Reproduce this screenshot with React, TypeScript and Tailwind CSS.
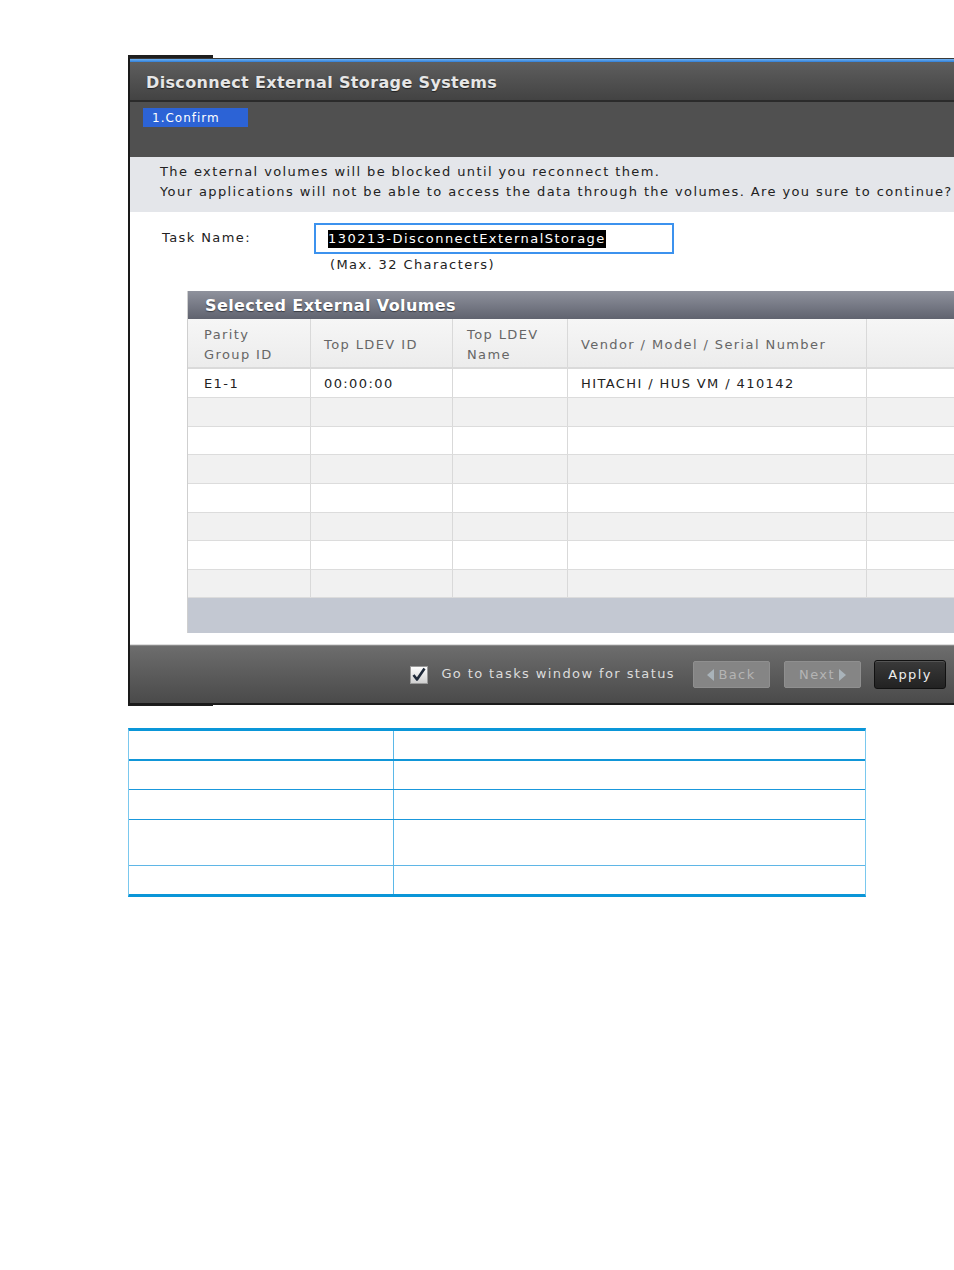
import React from "react";

const rowHeights = [29, 29, 28, 29, 29, 28, 29, 28];
const colW = ["w-[123px]", "w-[142px]", "w-[115px]", "w-[299px]", "w-[120px]"];
const colPad = ["pl-[16px]", "pl-[13px]", "pl-[14px]", "pl-[13px]", "pl-[13px]"];

function Cell({ i, children, header }: { i: number; children?: React.ReactNode; header?: boolean }) {
  return (
    <div
      className={`${colW[i]} ${colPad[i]} shrink-0 h-full border-r border-[#d9d9d9] flex items-center ${
        header ? "text-[#666] pt-[4px]" : "text-[#222] pt-[1px]"
      }`}
    >
      {children}
    </div>
  );
}

export default function App() {
  return (
    <div className="w-[954px] h-[1270px] bg-white overflow-hidden font-['DejaVu_Sans',Verdana,sans-serif] text-[13px] tracking-[1.4px]">
      <div className="pt-[55px] pl-[128px]">
        <div className="w-[826px] overflow-hidden">
          {/* top tab strip */}
          <div className="flex h-[3px]">
            <div className="w-[85px] bg-[#1e1e1e]" />
            <div className="flex-1 bg-white" />
          </div>
          <div className="border-l-2 border-b-2 border-[#1a1a1a]">
            <div className="h-[1px] bg-[#3a3a3a]" />
            <div className="h-[3px] bg-linear-to-b from-[#6fb2f2] to-[#2f7fd8]" />
            <div className="h-[38px] bg-linear-to-b from-[#5e5e5e] to-[#434343] flex items-center pl-[16px] pt-[3px]">
              <span className="text-[#e6e6e6] font-bold text-[16px] tracking-[0.35px] [text-shadow:0_1px_1px_#222]">
                Disconnect External Storage Systems
              </span>
            </div>
            <div className="h-[2px] bg-[#2b2b2b]" />
            <div className="h-[55px] bg-[#505050] pt-[6px] pl-[13px]">
              <div className="w-[105px] h-[19px] bg-[#2c63d6] text-white text-[12px] tracking-[1px] flex items-center pl-[9px]">
                1.Confirm
              </div>
            </div>
            <div className="h-[55px] bg-[#e4e6ea] pt-[5px] pl-[30px] leading-[20px] text-[#222] whitespace-nowrap">
              <div>The external volumes will be blocked until you reconnect them.</div>
              <div>Your applications will not be able to access the data through the volumes. Are you sure to continue?</div>
            </div>

            {/* body */}
            <div className="h-[433px] bg-white pt-[11px] border-b border-[#dedede]">
              <div className="flex items-center pl-[32px]">
                <div className="w-[152px] text-[#222] -mt-[2px]">Task Name:</div>
                <div className="w-[360px] h-[31px] border-2 border-[#3c92ee] flex items-center pl-[12px] bg-white">
                  <span className="bg-black text-white leading-[18px] tracking-[1.45px]">130213-DisconnectExternalStorage</span>
                </div>
              </div>
              <div className="mt-[2px] pl-[200px] leading-[18px] text-[#222]">(Max. 32 Characters)</div>

              <div className="mt-[17px] ml-[57px] w-[800px] border-l border-[#cfcfcf]">
                <div className="h-[28px] bg-linear-to-b from-[#8f929d] to-[#60636f] flex items-center pl-[17px] pt-[2px]">
                  <span className="text-white font-bold text-[16px] tracking-[0.4px] [text-shadow:0_1px_1px_#3a3c44]">
                    Selected External Volumes
                  </span>
                </div>
                <div className="h-[50px] flex bg-linear-to-b from-[#f6f6f6] to-[#ececec] border-b-2 border-[#dadada] leading-[20px]">
                  <Cell i={0} header>
                    <div>
                      Parity
                      <br />
                      Group ID
                    </div>
                  </Cell>
                  <Cell i={1} header>
                    Top LDEV ID
                  </Cell>
                  <Cell i={2} header>
                    <div>
                      Top LDEV
                      <br />
                      Name
                    </div>
                  </Cell>
                  <Cell i={3} header>
                    Vendor / Model / Serial Number
                  </Cell>
                  <Cell i={4} header />
                </div>
                {rowHeights.map((h, i) => (
                  <div
                    key={i}
                    className={`flex border-b border-[#dcdcdc] ${i % 2 === 0 ? "bg-white" : "bg-[#f1f1f1]"}`}
                    style={{ height: h }}
                  >
                    <Cell i={0}>{i === 0 ? "E1-1" : ""}</Cell>
                    <Cell i={1}>{i === 0 ? "00:00:00" : ""}</Cell>
                    <Cell i={2} />
                    <Cell i={3}>{i === 0 ? "HITACHI / HUS VM / 410142" : ""}</Cell>
                    <Cell i={4} />
                  </div>
                ))}
                <div className="h-[35px] bg-[#c3c8d2]" />
              </div>
            </div>

            {/* bottom bar */}
            <div className="h-[58px] bg-linear-to-b from-[#6d6d6d] to-[#4a4a4a] border-t border-[#8a8a8a] flex items-center justify-end pr-[8px]">
              <svg width="18" height="18" viewBox="0 0 18 18" className="mr-[13px]">
                <defs>
                  <linearGradient id="cb" x1="0" y1="0" x2="0" y2="1">
                    <stop offset="0" stopColor="#ffffff" />
                    <stop offset="1" stopColor="#cfcfcf" />
                  </linearGradient>
                </defs>
                <rect x="0.5" y="0.5" width="17" height="17" fill="url(#cb)" stroke="#9a9a9a" />
                <path d="M3.5 9 L7 13.5 L14.5 2.5" fill="none" stroke="#1f2a3a" strokeWidth="2.6" strokeLinejoin="round" />
              </svg>
              <span className="text-[#dcdcdc] mr-[18px] -mt-[2px]">Go to tasks window for status</span>
              <div className="w-[77px] h-[27px] rounded-[2px] bg-[#858585] border border-[#8f8f8f] flex items-center justify-center gap-[4px] text-[#b4b4b4] mr-[14px]">
                <svg width="7" height="12" viewBox="0 0 7 12">
                  <path d="M7 0 L0 6 L7 12 Z" fill="#a9b3ba" />
                </svg>
                <span>Back</span>
              </div>
              <div className="w-[77px] h-[27px] rounded-[2px] bg-[#858585] border border-[#8f8f8f] flex items-center justify-center gap-[4px] text-[#b4b4b4] mr-[13px]">
                <span>Next</span>
                <svg width="7" height="12" viewBox="0 0 7 12">
                  <path d="M0 0 L7 6 L0 12 Z" fill="#a9b3ba" />
                </svg>
              </div>
              <div className="w-[72px] h-[29px] rounded-[3px] bg-linear-to-b from-[#3a3a3a] to-[#222] border border-[#111] shadow-[inset_0_1px_0_#555] flex items-center justify-center text-[#eeeeee]">
                Apply
              </div>
            </div>
          </div>
          <div className="flex h-[1px]">
            <div className="w-[85px] bg-[#1e1e1e]" />
          </div>
        </div>

        {/* lower table */}
        <div className="mt-[22px] w-[738px] border-t-[3px] border-b-[3px] border-t-[#0a96d8] border-b-[#0a96d8] border-x border-x-[#7ac8ee]">
          {[
            { h: "h-[30px]", b: "border-b-2 border-b-[#1196d8]" },
            { h: "h-[29px]", b: "border-b border-b-[#1a98dc]" },
            { h: "h-[30px]", b: "border-b border-b-[#1a98dc]" },
            { h: "h-[46px]", b: "border-b border-b-[#5fb6e6]" },
            { h: "h-[28px]", b: "" },
          ].map((r, i) => (
            <div key={i} className={`flex ${r.h} ${r.b}`}>
              <div className="w-[265px] border-r border-[#5bb8e8]" />
              <div className="flex-1" />
            </div>
          ))}
        </div>
      </div>
    </div>
  );
}
